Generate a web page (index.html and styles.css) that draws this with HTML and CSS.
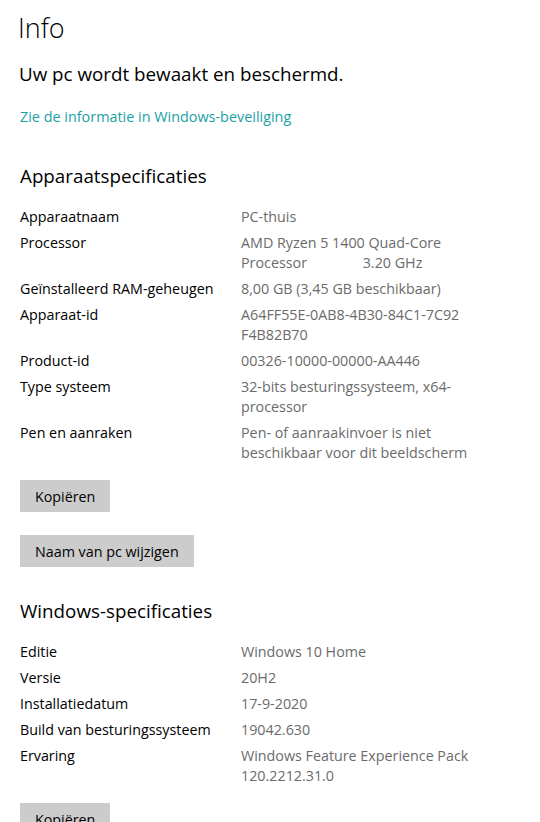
FILE: index.html
```html
<!DOCTYPE html>
<html>
<head>
    <title>Info</title>
    <meta charset="utf-8">
    <link rel="stylesheet" href="styles.css">
</head>
<body>
    <div class="page">
        <h1 class="title">Info</h1>
        <h2 class="status">Uw pc wordt bewaakt en beschermd.</h2>
        <a class="link" href="#">Zie de informatie in Windows-beveiliging</a>

        <h3 class="section">Apparaatspecificaties</h3>
        <div class="specs">
            <div class="label">Apparaatnaam</div>
            <div class="value">PC-thuis</div>
            <div class="label">Processor</div>
            <div class="value">AMD Ryzen 5 1400 Quad-Core<br><span class="pre">Processor               3.20 GHz</span></div>
            <div class="label">Geïnstalleerd RAM-geheugen</div>
            <div class="value">8,00 GB (3,45 GB beschikbaar)</div>
            <div class="label">Apparaat-id</div>
            <div class="value">A64FF55E-0AB8-4B30-84C1-7C92<br>F4B82B70</div>
            <div class="label">Product-id</div>
            <div class="value">00326-10000-00000-AA446</div>
            <div class="label">Type systeem</div>
            <div class="value">32-bits besturingssysteem, x64-<br>processor</div>
            <div class="label">Pen en aanraken</div>
            <div class="value">Pen- of aanraakinvoer is niet<br>beschikbaar voor dit beeldscherm</div>
        </div>
        <div class="buttons">
            <button class="btn">Kopiëren</button>
            <button class="btn">Naam van pc wijzigen</button>
        </div>

        <h3 class="section section-2">Windows-specificaties</h3>
        <div class="specs">
            <div class="label">Editie</div>
            <div class="value">Windows 10 Home</div>
            <div class="label">Versie</div>
            <div class="value">20H2</div>
            <div class="label">Installatiedatum</div>
            <div class="value">17-9-2020</div>
            <div class="label">Build van besturingssysteem</div>
            <div class="value">19042.630</div>
            <div class="label">Ervaring</div>
            <div class="value">Windows Feature Experience Pack<br>120.2212.31.0</div>
        </div>
        <div class="buttons">
            <button class="btn">Kopiëren</button>
        </div>
    </div>
</body>
</html>
```

FILE: styles.css
```css
body {
    margin: 0;
    background-color: #fff;
    font-family: "Open Sans", "Noto Sans", sans-serif;
    color: #000;
    overflow: hidden;
}

.page {
    display: flex;
    flex-direction: column;
    align-items: flex-start;
    padding: 10px 20px 0 20px;
}

.title {
    margin: 0 0 0 -2px;
    font-size: 27px;
    font-weight: 300;
    line-height: 36px;
}

.status {
    margin: 14px 0 0 -1px;
    font-size: 18.8px;
    font-weight: 400;
    line-height: 28px;
}

.link {
    margin-top: 19px;
    font-size: 14.4px;
    line-height: 20px;
    color: #1ba1a5;
    text-decoration: none;
}

.section {
    margin: 35px 0 0 0;
    font-size: 18.8px;
    font-weight: 400;
    line-height: 28px;
}

.section-2 {
    margin-top: 30px;
}

.specs {
    display: grid;
    grid-template-columns: 221px auto;
    row-gap: 6px;
    margin-top: 17px;
    font-size: 14.3px;
    line-height: 20px;
}

.value {
    color: #6b6b6b;
    white-space: nowrap;
}

.pre {
    white-space: pre;
}

.buttons {
    display: flex;
    flex-direction: column;
    align-items: flex-start;
    gap: 23px;
    margin-top: 17px;
}

.btn {
    height: 32px;
    padding: 0 15px;
    border: none;
    background-color: #ccc;
    font-family: inherit;
    font-size: 14.3px;
    color: #000;
}
```
